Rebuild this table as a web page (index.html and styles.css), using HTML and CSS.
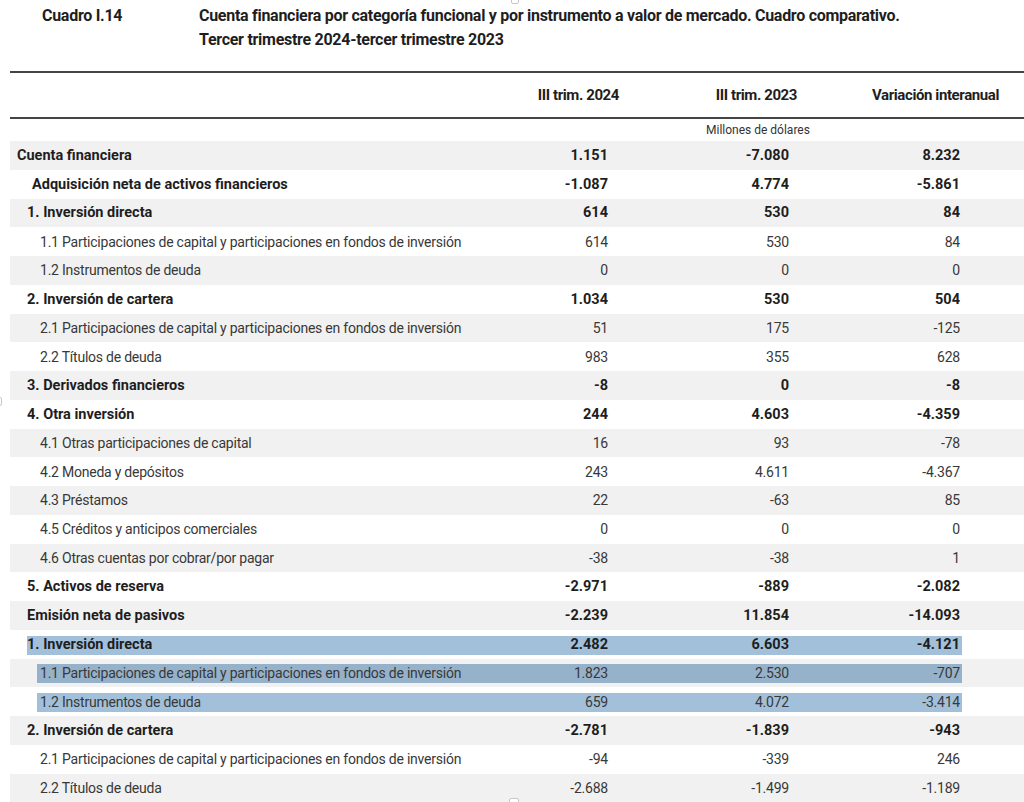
FILE: index.html
```html
<!DOCTYPE html>
<html lang="es">
<head>
<meta charset="utf-8">
<title>Cuadro I.14</title>
<link rel="stylesheet" href="styles.css">
</head>
<body>
<div class="mark mark-top"></div>
<div class="mark mark-left"></div>
<div class="mark mark-bottom"></div>
<header class="caption">
  <div class="num">Cuadro I.14</div>
  <div class="title">Cuenta financiera por categoría funcional y por instrumento a valor de mercado. Cuadro comparativo.<br>Tercer trimestre 2024-tercer trimestre 2023</div>
</header>
<div class="table">
  <div class="thead">
    <div class="lab"></div>
    <div class="c1">III trim. 2024</div>
    <div class="c2">III trim. 2023</div>
    <div class="c3">Variación interanual</div>
  </div>
  <div class="unit">Millones de dólares</div>

  <div class="row g b l0"><div class="lab">Cuenta financiera</div><div class="c1">1.151</div><div class="c2">-7.080</div><div class="c3">8.232</div></div>
  <div class="row b l1"><div class="lab">Adquisición neta de activos financieros</div><div class="c1">-1.087</div><div class="c2">4.774</div><div class="c3">-5.861</div></div>
  <div class="row g b l2"><div class="lab">1. Inversión directa</div><div class="c1">614</div><div class="c2">530</div><div class="c3">84</div></div>
  <div class="row l3"><div class="lab">1.1 Participaciones de capital y participaciones en fondos de inversión</div><div class="c1">614</div><div class="c2">530</div><div class="c3">84</div></div>
  <div class="row g l3"><div class="lab">1.2 Instrumentos de deuda</div><div class="c1">0</div><div class="c2">0</div><div class="c3">0</div></div>
  <div class="row b l2"><div class="lab">2. Inversión de cartera</div><div class="c1">1.034</div><div class="c2">530</div><div class="c3">504</div></div>
  <div class="row g l3"><div class="lab">2.1 Participaciones de capital y participaciones en fondos de inversión</div><div class="c1">51</div><div class="c2">175</div><div class="c3">-125</div></div>
  <div class="row l3"><div class="lab">2.2 Títulos de deuda</div><div class="c1">983</div><div class="c2">355</div><div class="c3">628</div></div>
  <div class="row g b l2"><div class="lab">3. Derivados financieros</div><div class="c1">-8</div><div class="c2">0</div><div class="c3">-8</div></div>
  <div class="row b l2"><div class="lab">4. Otra inversión</div><div class="c1">244</div><div class="c2">4.603</div><div class="c3">-4.359</div></div>
  <div class="row g l3"><div class="lab">4.1 Otras participaciones de capital</div><div class="c1">16</div><div class="c2">93</div><div class="c3">-78</div></div>
  <div class="row l3"><div class="lab">4.2 Moneda y depósitos</div><div class="c1">243</div><div class="c2">4.611</div><div class="c3">-4.367</div></div>
  <div class="row g l3"><div class="lab">4.3 Préstamos</div><div class="c1">22</div><div class="c2">-63</div><div class="c3">85</div></div>
  <div class="row l3"><div class="lab">4.5 Créditos y anticipos comerciales</div><div class="c1">0</div><div class="c2">0</div><div class="c3">0</div></div>
  <div class="row g l3"><div class="lab">4.6 Otras cuentas por cobrar/por pagar</div><div class="c1">-38</div><div class="c2">-38</div><div class="c3">1</div></div>
  <div class="row b l2"><div class="lab">5. Activos de reserva</div><div class="c1">-2.971</div><div class="c2">-889</div><div class="c3">-2.082</div></div>
  <div class="row g b l2"><div class="lab">Emisión neta de pasivos</div><div class="c1">-2.239</div><div class="c2">11.854</div><div class="c3">-14.093</div></div>
  <div class="row b l2"><div class="hl hl-a"></div><div class="lab">1. Inversión directa</div><div class="c1">2.482</div><div class="c2">6.603</div><div class="c3">-4.121</div></div>
  <div class="row g l3"><div class="hl hl-b"></div><div class="lab">1.1 Participaciones de capital y participaciones en fondos de inversión</div><div class="c1">1.823</div><div class="c2">2.530</div><div class="c3">-707</div></div>
  <div class="row l3"><div class="hl hl-b"></div><div class="lab">1.2 Instrumentos de deuda</div><div class="c1">659</div><div class="c2">4.072</div><div class="c3">-3.414</div></div>
  <div class="row g b l2"><div class="lab">2. Inversión de cartera</div><div class="c1">-2.781</div><div class="c2">-1.839</div><div class="c3">-943</div></div>
  <div class="row l3"><div class="lab">2.1 Participaciones de capital y participaciones en fondos de inversión</div><div class="c1">-94</div><div class="c2">-339</div><div class="c3">246</div></div>
  <div class="row g l3"><div class="lab">2.2 Títulos de deuda</div><div class="c1">-2.688</div><div class="c2">-1.499</div><div class="c3">-1.189</div></div>
</div>
</body>
</html>
```
FILE: styles.css
```css
* { box-sizing: border-box; }
html, body { margin: 0; padding: 0; background: #fff; }
body {
  font-family: Roboto, "Liberation Sans", sans-serif;
  color: #383838;
  width: 1024px;
  height: 802px;
  overflow: hidden;
  position: relative;
}

.caption {
  display: flex;
  padding-top: 4px;
  line-height: 24px;
  font-size: 16px;
  letter-spacing: -0.28px;
  font-weight: bold;
  color: #1e1e1e;
  white-space: nowrap;
}
.caption .num { width: 199px; padding-left: 42px; flex: none; }

.table { margin: 19px 0 0 10px; }

.thead,
.row {
  display: grid;
  grid-template-columns: 510px 100px 180px 224px;
  align-items: center;
}
.thead {
  height: 48px;
  border-top: 2px solid #444;
  border-bottom: 2px solid #444;
  font-weight: bold;
  font-size: 15px;
  letter-spacing: -0.4px;
  color: #1e1e1e;
  white-space: nowrap;
}
.thead .c1, .thead .c2, .thead .c3 { text-align: right; }
.thead .c1 { padding-right: 1px; }
.thead .c2 { padding-right: 3px; }
.thead .c3 { padding-right: 25px; }

.unit {
  height: 22px;
  line-height: 22px;
  font-size: 12px;
  padding-left: 696px;
  color: #333;
}

.row {
  height: 28.75px;
  font-size: 14px;
  letter-spacing: -0.23px;
  white-space: nowrap;
}
.row > * { grid-row: 1; }
.row .lab { grid-column: 1; }
.row .c1 { grid-column: 2; text-align: right; padding-right: 12px; }
.row .c2 { grid-column: 3; text-align: right; padding-right: 11px; }
.row .c3 { grid-column: 4; text-align: right; padding-right: 64px; }

.row.g { background: #f1f1f1; }
.row.b { font-weight: bold; color: #1e1e1e; font-size: 14.5px; letter-spacing: 0; }

.l0 .lab { padding-left: 7px; }
.l1 .lab { padding-left: 22px; }
.l2 .lab { padding-left: 17px; }
.l3 .lab { padding-left: 30px; }

.hl {
  grid-column: 1 / -1;
  height: 19px;
  margin-right: 62px;
  margin-top: 2px;
  background: #a2c0d9;
}
.hl-a { margin-left: 17px; }
.hl-b { margin-left: 27px; }
.row.g .hl { background: #96b2ca; }

.mark { position: absolute; border: 1px solid #c8c8c8; background: #fff; }
.mark-top { left: 511px; top: -4px; width: 8px; height: 8px; border-radius: 2px; }
.mark-left { left: -2px; top: 397px; width: 4px; height: 9px; border-radius: 2px; }
.mark-bottom { left: 509px; top: 798px; width: 10px; height: 8px; border-radius: 2px; }
```
